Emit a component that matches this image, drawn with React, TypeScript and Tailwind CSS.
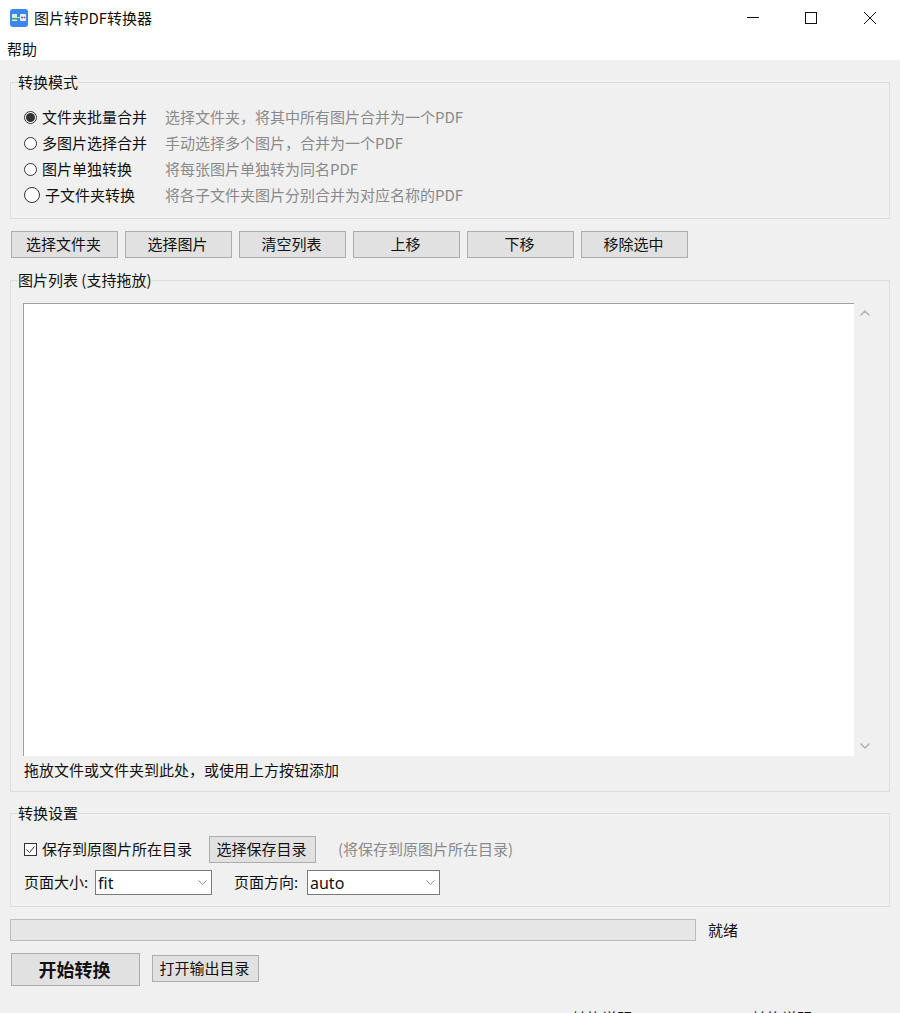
import { ChevronDown, ChevronUp } from 'lucide-react';

const MODES = [
  { label: '文件夹批量合并', hint: '选择文件夹，将其中所有图片合并为一个PDF', checked: true, big: false },
  { label: '多图片选择合并', hint: '手动选择多个图片，合并为一个PDF', checked: false, big: false },
  { label: '图片单独转换', hint: '将每张图片单独转为同名PDF', checked: false, big: false },
  { label: '子文件夹转换', hint: '将各子文件夹图片分别合并为对应名称的PDF', checked: false, big: true },
];

const TOOLBAR = ['选择文件夹', '选择图片', '清空列表', '上移', '下移', '移除选中'];

function Button({ label }: { label: string }) {
  return (
    <button className="w-[107px] h-[27px] shrink-0 bg-[#e1e1e1] border border-[#adadad] pr-[2px] pb-[2px] text-[15px] leading-none text-[#111]">
      {label}
    </button>
  );
}

function Group({ title, className, children }: { title: string; className: string; children: React.ReactNode }) {
  return (
    <fieldset className={`${className} border border-[#dcdcdc] mx-[10px] px-[13px] min-w-0`}>
      <legend className="ml-[-6px] text-[15px] leading-[20px] text-[#111] px-0">{title}</legend>
      {children}
    </fieldset>
  );
}

function Select({ value, width }: { value: string; width: string }) {
  return (
    <div className={`${width} h-[25px] bg-white border border-[#7a7a7a] flex items-center justify-between pl-[2px] pr-[1px]`}>
      <span className="font-['Noto_Sans',sans-serif] text-[16px] leading-none text-[#111]">{value}</span>
      <ChevronDown className="w-[15px] h-[15px] text-[#444]" strokeWidth={1} />
    </div>
  );
}

export default function App() {
  return (
    <div className="w-[900px] h-[1013px] overflow-hidden bg-[#f0f0f0] font-['Noto_Sans_CJK_SC','Liberation_Sans',sans-serif] text-[15px] text-[#111]">
      <header className="bg-white h-[60px]">
        <div className="h-[36px] flex items-center pl-[10px]">
          <svg width="18" height="18" viewBox="0 0 18 18" className="shrink-0">
            <rect width="18" height="18" rx="3" fill="#3d86ee" />
            <rect x="2" y="5" width="5" height="7" fill="#d8f0e4" />
            <rect x="2" y="9" width="5" height="1.5" fill="#2fa36b" />
            <rect x="10" y="5" width="6" height="7" rx="1" fill="#eef2fb" />
            <circle cx="12" cy="8.5" r="1" fill="#3d55a8" />
            <circle cx="14.5" cy="8.5" r="1" fill="#c2506a" />
            <rect x="7.5" y="8" width="2" height="1" fill="#fff" />
          </svg>
          <span className="ml-[6px] pb-[2px] text-[15px] leading-none whitespace-nowrap">图片转PDF转换器</span>
          <div className="ml-auto flex items-center">
            <div className="w-[58px] h-[36px] flex items-center justify-center">
              <div className="w-[12px] h-px bg-[#111] mb-[2px]" />
            </div>
            <div className="w-[58px] h-[36px] flex items-center justify-center">
              <div className="w-[12px] h-[12px] border border-[#111]" />
            </div>
            <div className="w-[60px] h-[36px] flex items-center justify-center">
              <svg width="12" height="12" viewBox="0 0 12 12" stroke="#111" strokeWidth="1">
                <path d="M0 0 L12 12 M12 0 L0 12" />
              </svg>
            </div>
          </div>
        </div>
        <div className="pl-[7px] leading-[26px] text-[15px]">帮助</div>
      </header>

      <div className="pt-[12px]">
        <Group title="转换模式" className="h-[147px]">
          <div className="pt-[12px] flex flex-col">
            {MODES.map(m => (
              <div key={m.label} className="h-[26px] flex items-center whitespace-nowrap">
                <span className="w-[18px] flex items-center justify-start">
                  <span className={`${m.big ? 'w-[16px] h-[16px]' : 'w-[13px] h-[13px]'} shrink-0 rounded-full border border-[#333] bg-white flex items-center justify-center`}>
                    {m.checked && <span className="w-[9px] h-[9px] rounded-full bg-[#333]" />}
                  </span>
                </span>
                <span className={m.big ? 'ml-[3px] w-[120px]' : 'w-[123px]'}>{m.label}</span>
                <span className="text-[#8a8a8a]">{m.hint}</span>
              </div>
            ))}
          </div>
        </Group>

        <div className="mt-[12px] ml-[11px] flex gap-[7px]">
          {TOOLBAR.map(t => <Button key={t} label={t} />)}
        </div>

        <Group title="图片列表 (支持拖放)" className="mt-[12px] h-[522px]">
          <div className="pt-[13px] flex ml-[-1px]">
            <div className="w-[833px] h-[453px] bg-white border-t border-l border-[#a0a0a0]" />
            <div className="w-[22px] h-[453px] flex flex-col items-center justify-between py-[2px]">
              <ChevronUp className="w-[16px] h-[16px] text-[#b4b4b4]" strokeWidth={2.5} />
              <ChevronDown className="w-[16px] h-[16px] text-[#b4b4b4]" strokeWidth={2.5} />
            </div>
          </div>
          <div className="mt-[3px] leading-[22px] text-[15px] whitespace-nowrap">拖放文件或文件夹到此处，或使用上方按钮添加</div>
        </Group>

        <Group title="转换设置" className="mt-[11px] h-[104px]">
          <div className="mt-[13px] flex items-center h-[27px]">
            <span className="w-[13px] h-[13px] border border-[#333] bg-white flex items-center justify-center shrink-0">
              <svg width="11" height="11" viewBox="0 0 11 11" fill="none" stroke="#333" strokeWidth="1">
                <path d="M1.5 5.5 L4.5 8.5 L9.5 2.5" />
              </svg>
            </span>
            <span className="ml-[5px] whitespace-nowrap w-[167px]">保存到原图片所在目录</span>
            <Button label="选择保存目录" />
            <span className="ml-[22px] text-[#8a8a8a] whitespace-nowrap">(将保存到原图片所在目录)</span>
          </div>
          <div className="mt-[7px] flex items-center">
            <span className="w-[71px] whitespace-nowrap">页面大小:</span>
            <Select value="fit" width="w-[117px]" />
            <span className="ml-[22px] w-[73px] whitespace-nowrap">页面方向:</span>
            <Select value="auto" width="w-[133px]" />
          </div>
        </Group>

        <div className="mt-[12px] ml-[10px] flex items-center h-[22px]">
          <div className="w-[686px] h-[22px] bg-[#e6e6e6] border border-[#bcbcbc]" />
          <span className="ml-[12px]">就绪</span>
        </div>

        <div className="mt-[12px] ml-[11px] flex items-start gap-[12px]">
          <button className="w-[129px] h-[33px] bg-[#e1e1e1] border border-[#adadad] pr-[2px] pb-[2px] text-[18px] font-bold leading-none text-[#111]">开始转换</button>
          <div className="mt-[2px]">
            <Button label="打开输出目录" />
          </div>
        </div>

        {/* row cut off by the window's lower edge, only the tops of the glyphs show */}
        <div className="mt-[22px] ml-[572px] flex gap-[120px] leading-[20px] whitespace-nowrap">
          <span className="w-[60px]">转换说明</span>
          <span className="w-[60px]">转换说明</span>
        </div>
      </div>
    </div>
  );
}
